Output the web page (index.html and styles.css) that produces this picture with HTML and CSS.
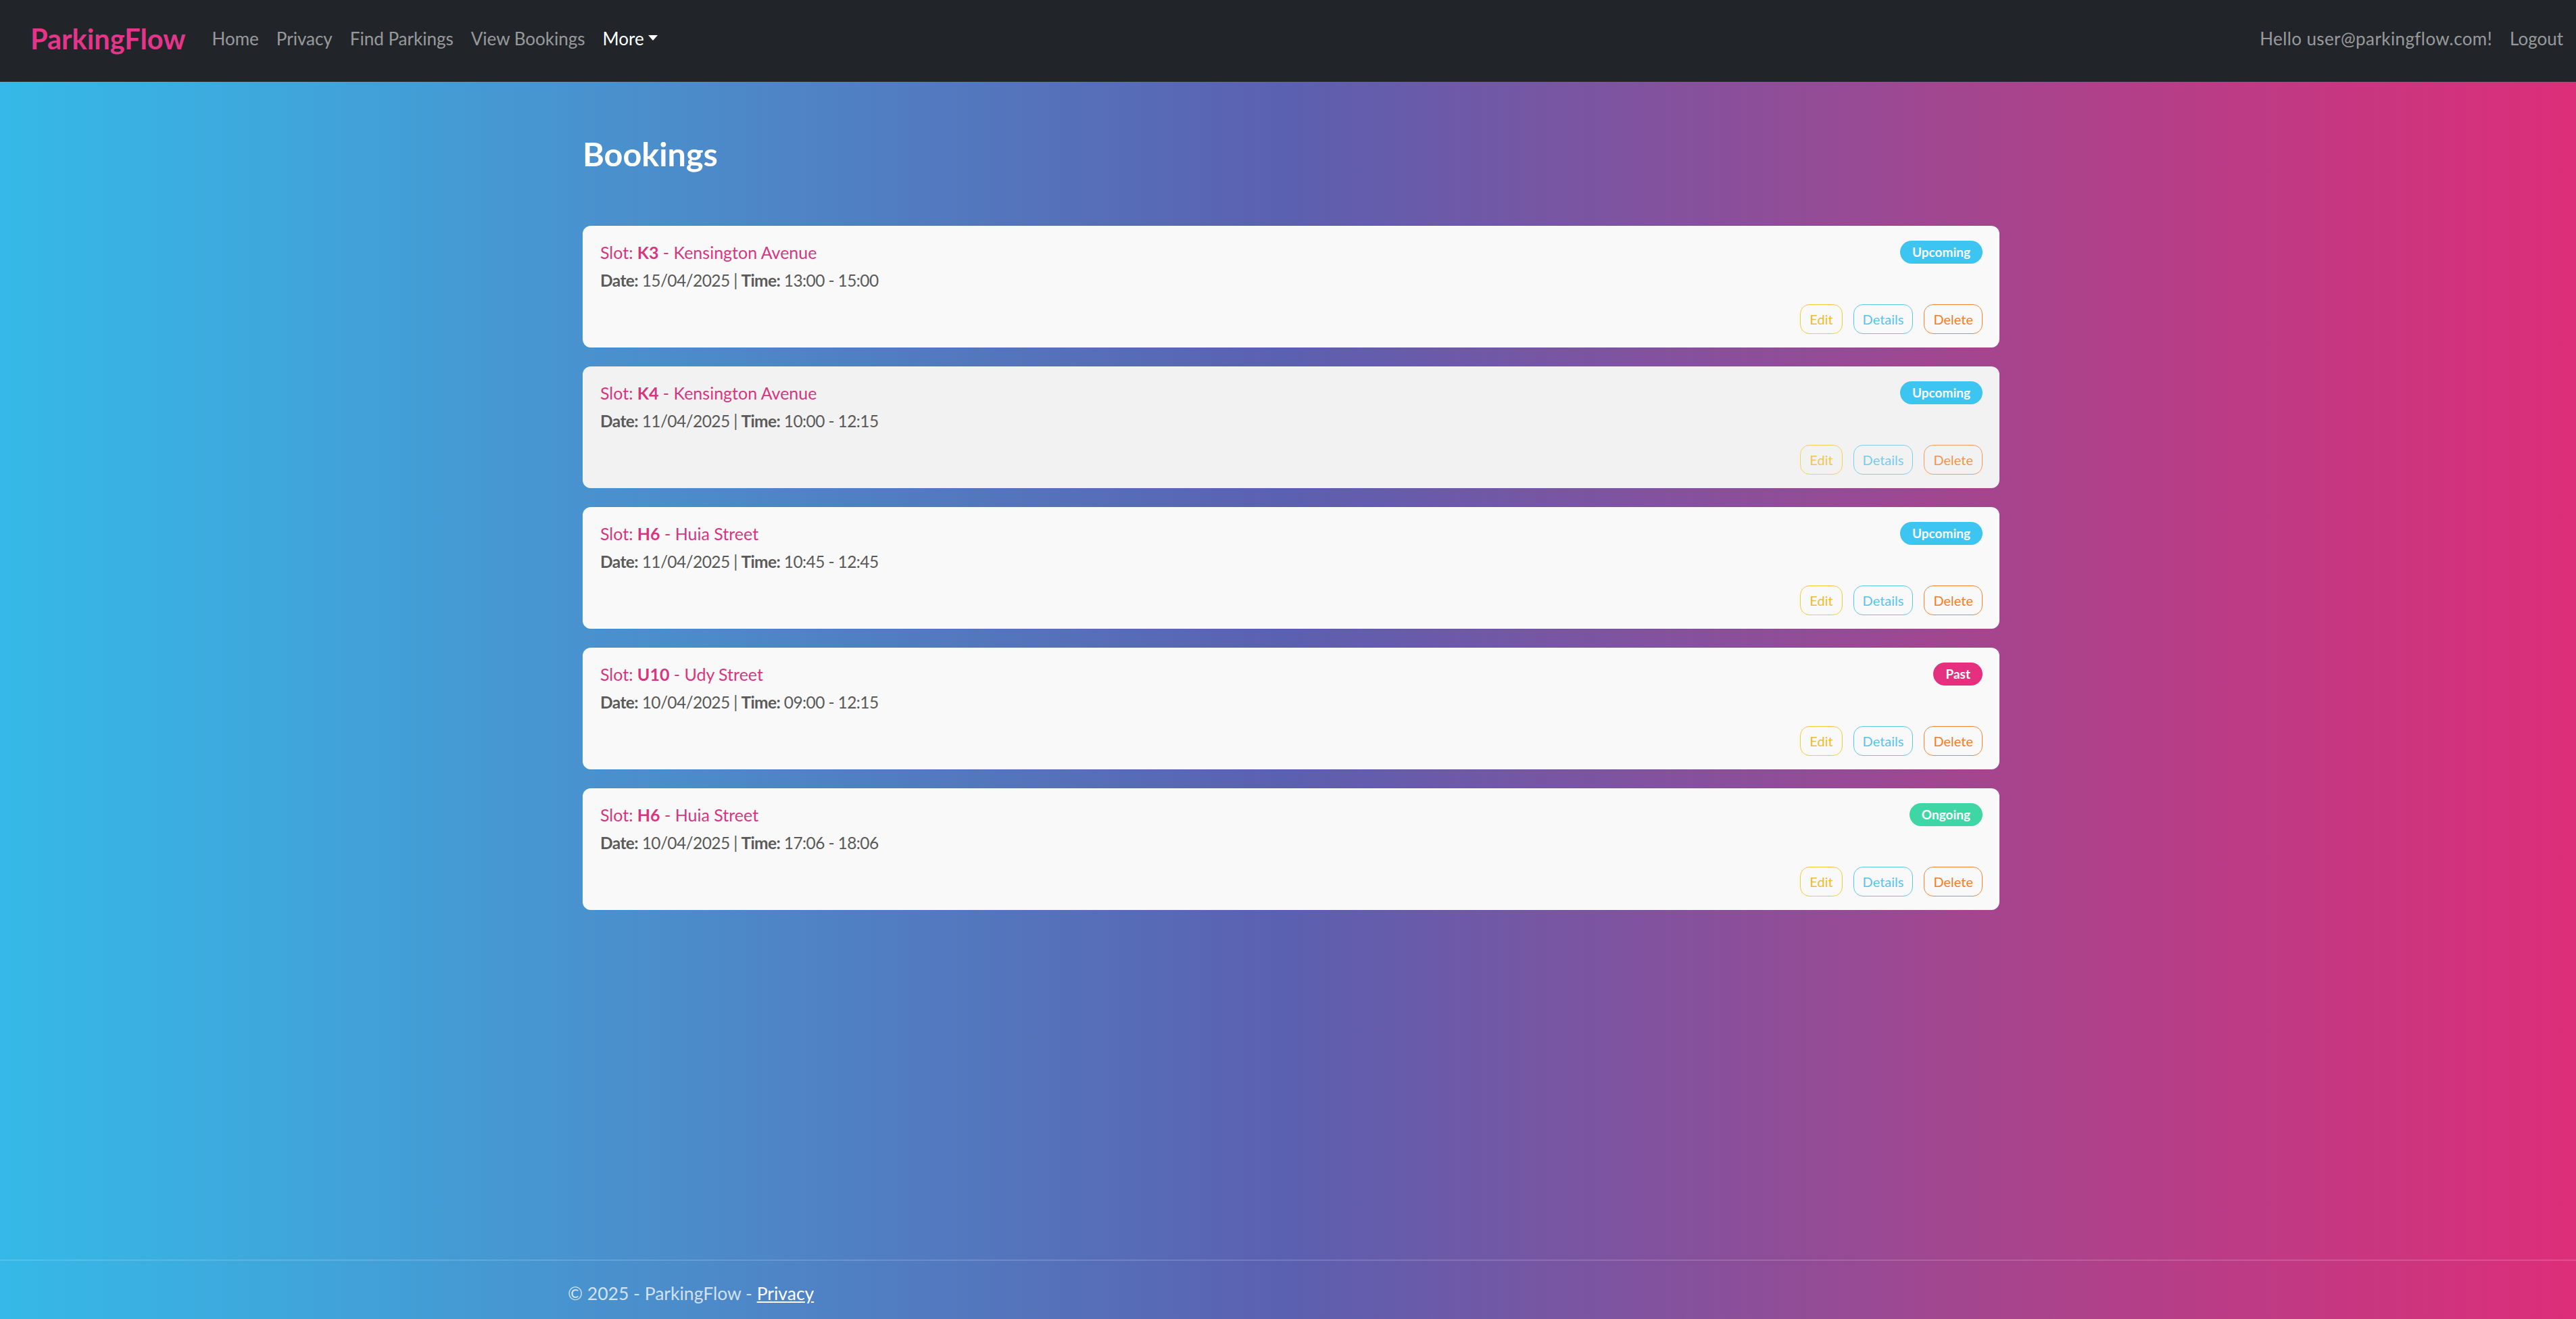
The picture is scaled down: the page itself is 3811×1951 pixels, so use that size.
FILE: index.html
```html
<!DOCTYPE html>
<html lang="en">
<head>
<meta charset="utf-8">
<title>Bookings - ParkingFlow</title>
<link rel="stylesheet" href="styles.css">
</head>
<body>
<header class="navbar">
  <a class="brand" href="#">ParkingFlow</a>
  <ul class="nav">
    <li><a class="nav-link" href="#">Home</a></li>
    <li><a class="nav-link" href="#">Privacy</a></li>
    <li><a class="nav-link" href="#">Find Parkings</a></li>
    <li><a class="nav-link" href="#">View Bookings</a></li>
    <li><a class="nav-link active dropdown-toggle" href="#">More</a></li>
  </ul>
  <ul class="nav nav-right">
    <li><span class="nav-link nav-greeting">Hello user@parkingflow.com!</span></li>
    <li><a class="nav-link" href="#">Logout</a></li>
  </ul>
</header>

<main class="main">
  <h2 class="page-title">Bookings</h2>
  <div class="booking-list">
    <article class="booking-card">
      <div class="booking-head">
        <h5 class="slot">Slot: <strong>K3</strong> - Kensington Avenue</h5>
        <span class="badge badge-upcoming">Upcoming</span>
      </div>
      <p class="booking-meta"><strong>Date:</strong> 15/04/2025 | <strong>Time:</strong> 13:00 - 15:00</p>
      <div class="booking-actions">
        <a class="btn btn-edit" href="#">Edit</a>
        <a class="btn btn-details" href="#">Details</a>
        <a class="btn btn-delete" href="#">Delete</a>
      </div>
    </article>
    <article class="booking-card booking-card-hover">
      <div class="booking-head">
        <h5 class="slot">Slot: <strong>K4</strong> - Kensington Avenue</h5>
        <span class="badge badge-upcoming">Upcoming</span>
      </div>
      <p class="booking-meta"><strong>Date:</strong> 11/04/2025 | <strong>Time:</strong> 10:00 - 12:15</p>
      <div class="booking-actions">
        <a class="btn btn-edit" href="#">Edit</a>
        <a class="btn btn-details" href="#">Details</a>
        <a class="btn btn-delete" href="#">Delete</a>
      </div>
    </article>
    <article class="booking-card">
      <div class="booking-head">
        <h5 class="slot">Slot: <strong>H6</strong> - Huia Street</h5>
        <span class="badge badge-upcoming">Upcoming</span>
      </div>
      <p class="booking-meta"><strong>Date:</strong> 11/04/2025 | <strong>Time:</strong> 10:45 - 12:45</p>
      <div class="booking-actions">
        <a class="btn btn-edit" href="#">Edit</a>
        <a class="btn btn-details" href="#">Details</a>
        <a class="btn btn-delete" href="#">Delete</a>
      </div>
    </article>
    <article class="booking-card">
      <div class="booking-head">
        <h5 class="slot">Slot: <strong>U10</strong> - Udy Street</h5>
        <span class="badge badge-past">Past</span>
      </div>
      <p class="booking-meta"><strong>Date:</strong> 10/04/2025 | <strong>Time:</strong> 09:00 - 12:15</p>
      <div class="booking-actions">
        <a class="btn btn-edit" href="#">Edit</a>
        <a class="btn btn-details" href="#">Details</a>
        <a class="btn btn-delete" href="#">Delete</a>
      </div>
    </article>
    <article class="booking-card">
      <div class="booking-head">
        <h5 class="slot">Slot: <strong>H6</strong> - Huia Street</h5>
        <span class="badge badge-ongoing">Ongoing</span>
      </div>
      <p class="booking-meta"><strong>Date:</strong> 10/04/2025 | <strong>Time:</strong> 17:06 - 18:06</p>
      <div class="booking-actions">
        <a class="btn btn-edit" href="#">Edit</a>
        <a class="btn btn-details" href="#">Details</a>
        <a class="btn btn-delete" href="#">Delete</a>
      </div>
    </article>
  </div>
</main>

<footer class="footer">
  &copy; 2025 - ParkingFlow - <a class="footer-link" href="#">Privacy</a>
</footer>
</body>
</html>
```

FILE: styles.css
```css
* {
  box-sizing: border-box;
}

html, body {
  margin: 0;
  padding: 0;
}

body {
  height: 100vh;
  display: flex;
  flex-direction: column;
  font-family: Lato, "Open Sans", "Noto Sans", sans-serif;
  background: linear-gradient(90deg, #35b9e7 0%, #4c8bca 27%, #5b60b0 50%, #a2468f 76%, #dd2e79 100%);
  overflow: hidden;
}

/* ---------- Navbar ---------- */
.navbar {
  flex-shrink: 0;
  height: 121px;
  display: flex;
  align-items: flex-start;
  padding: 37px 6px 0 45px;
  background: #212529;
}

.brand {
  font-size: 41.5px;
  line-height: 40px;
  font-weight: 700;
  color: #e5358a;
  text-decoration: none;
  margin-right: 26px;
}

.nav {
  display: flex;
  list-style: none;
  margin: 0;
  padding: 0;
}

.nav-right {
  margin-left: auto;
}

.nav-link {
  display: block;
  padding: 0 13px;
  font-size: 26px;
  line-height: 40px;
  color: rgba(255, 255, 255, 0.55);
  text-decoration: none;
}

.nav-greeting {
  letter-spacing: 0.4px;
}

.nav-link.active {
  color: #fff;
}

.dropdown-toggle::after {
  content: "";
  display: inline-block;
  margin-left: 6px;
  vertical-align: 7px;
  border-top: 8px solid #fff;
  border-left: 7px solid transparent;
  border-right: 7px solid transparent;
}

/* ---------- Main ---------- */
.main {
  flex: 1;
  padding: 0 853px 0 862px;
}

.page-title {
  margin: 78px 0 79px;
  font-size: 48.5px;
  line-height: 56px;
  font-weight: 700;
  color: #fff;
}

.booking-list {
  display: flex;
  flex-direction: column;
  gap: 28px;
}

.booking-card {
  background: #f9f9f9;
  border-radius: 12px;
  padding: 20px 25px 20px 26px;
}

.booking-card-hover {
  background: #f2f2f2;
}

.booking-head {
  display: flex;
  justify-content: space-between;
  align-items: center;
}

.slot {
  margin: 0;
  font-size: 25px;
  line-height: 38px;
  font-weight: 400;
  color: #d8357f;
}

.slot strong {
  font-weight: 700;
}

.badge {
  display: inline-block;
  height: 34px;
  padding: 0 18px;
  border-radius: 17px;
  font-size: 19px;
  line-height: 34px;
  font-weight: 700;
  color: #fff;
}

.badge-upcoming {
  background: #3cc5f1;
}

.badge-past {
  background: #e4307f;
}

.badge-ongoing {
  background: #3ed6a4;
}

.booking-meta {
  margin: 4px 0 0;
  font-size: 24.5px;
  line-height: 38px;
  letter-spacing: -0.6px;
  color: #5a5a5a;
}

.booking-meta strong {
  font-weight: 700;
}

.booking-actions {
  display: flex;
  justify-content: flex-end;
  gap: 16px;
  margin-top: 16px;
}

.btn {
  display: inline-block;
  height: 44px;
  padding: 0 13px;
  border: 1px solid;
  border-radius: 14px;
  font-size: 20px;
  line-height: 42px;
  text-decoration: none;
  background: transparent;
}

.btn-edit {
  color: #f3b92d;
  border-color: #fcc73a;
}

.btn-details {
  color: #58c3ee;
  border-color: #5ec7f0;
}

.btn-delete {
  color: #ee7e2b;
  border-color: #f0883a;
}

.booking-card-hover .btn {
  opacity: 0.8;
}

/* ---------- Footer ---------- */
.footer {
  flex-shrink: 0;
  height: 88px;
  border-top: 2px solid rgba(255, 255, 255, 0.15);
  padding: 11px 0 0 840px;
  font-size: 26.5px;
  line-height: 75px;
  color: rgba(255, 255, 255, 0.75);
  white-space: nowrap;
}

.footer-link {
  color: #fff;
  text-decoration: underline;
}
```
